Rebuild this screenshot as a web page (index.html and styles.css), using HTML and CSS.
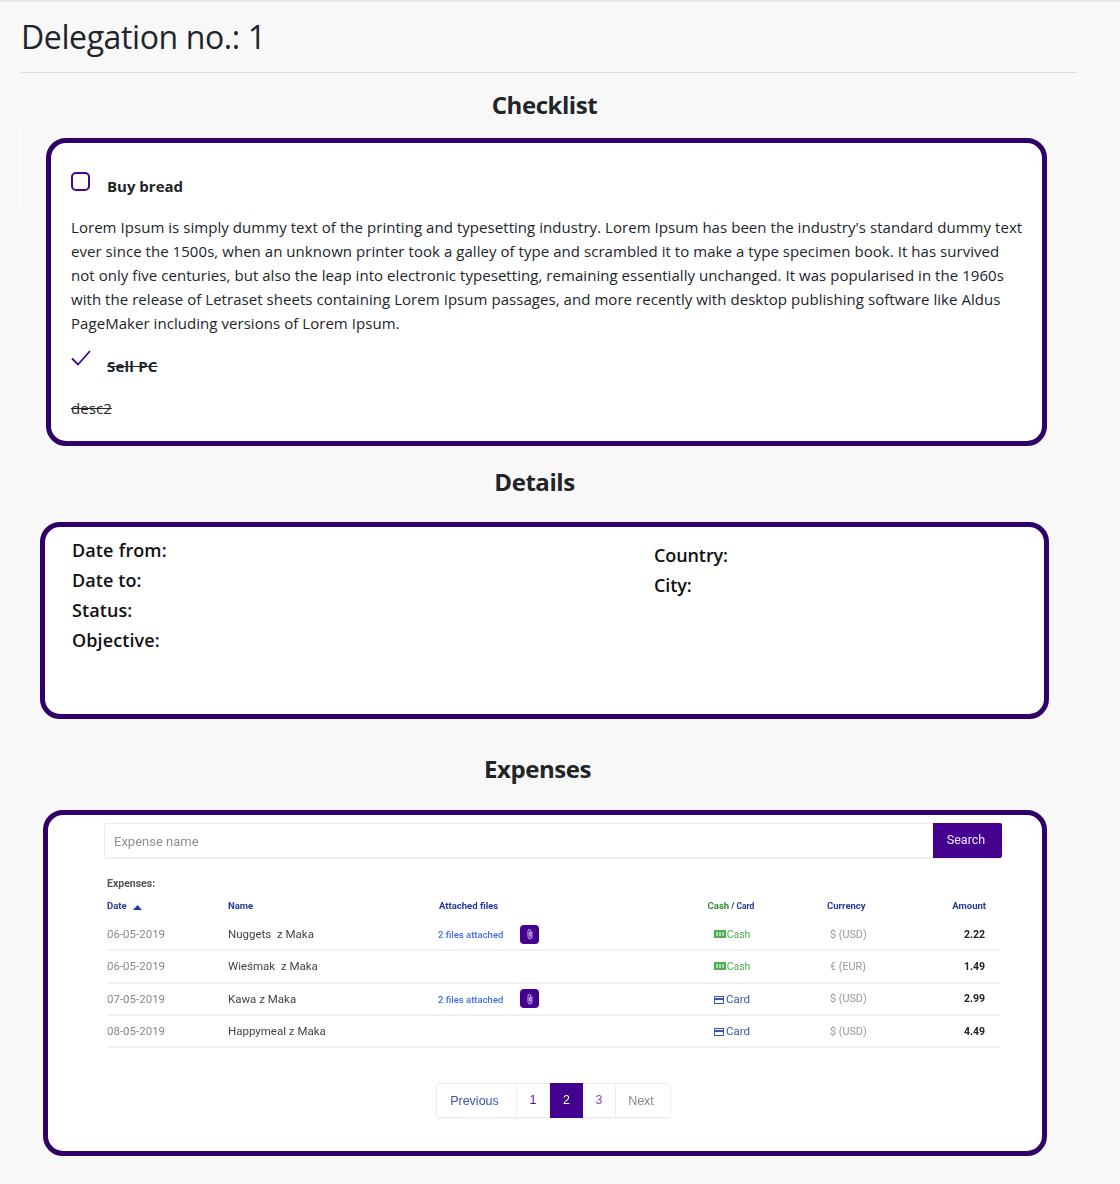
FILE: index.html
```html
<!DOCTYPE html>
<html lang="en">
<head>
<meta charset="utf-8">
<title>Delegation no.: 1</title>
<link rel="stylesheet" href="styles.css">
</head>
<body>
<div class="topshade"></div>
<main class="page">
  <h1 class="title">Delegation no.: 1</h1>
  <hr class="rule">
  <h2 class="heading heading-checklist">Checklist</h2>
  <section class="card card-checklist">
    <div class="task">
      <span class="box"></span>
      <strong class="task-name">Buy bread</strong>
    </div>
    <p class="task-desc">Lorem Ipsum is simply dummy text of the printing and typesetting industry. Lorem Ipsum has been the industry's standard dummy text ever since the 1500s, when an unknown printer took a galley of type and scrambled it to make a type specimen book. It has survived not only five centuries, but also the leap into electronic typesetting, remaining essentially unchanged. It was popularised in the 1960s with the release of Letraset sheets containing Lorem Ipsum passages, and more recently with desktop publishing software like Aldus PageMaker including versions of Lorem Ipsum.</p>
    <div class="task task-done">
      <svg class="tick" width="20" height="18" viewBox="0 0 20 18"><path d="M1 9.5 L7 15.5 L19 2" fill="none" stroke="#3f0a8c" stroke-width="1.8"/></svg>
      <strong class="task-name done">Sell PC</strong>
    </div>
    <p class="task-desc task-desc-last done">desc2</p>
  </section>

  <h2 class="heading heading-details">Details</h2>
  <section class="card card-details">
    <div class="detail-col">
      <div class="detail detail-from">Date from:</div>
      <div class="detail">Date to:</div>
      <div class="detail">Status:</div>
      <div class="detail">Objective:</div>
    </div>
    <div class="detail-col-right">
      <div class="detail">Country:</div>
      <div class="detail">City:</div>
    </div>
  </section>

  <h2 class="heading heading-expenses">Expenses</h2>
  <section class="card card-expenses">
    <div class="shot">
      <div class="search">
        <div class="search-input">Expense name</div>
        <div class="search-btn">Search</div>
      </div>
      <div class="exp-label">Expenses:</div>
      <div class="row row-head">
        <span class="c-date">Date <svg class="sort" width="9" height="5" viewBox="0 0 9 5"><path d="M4.5 0 L9 5 L0 5 Z" fill="#1f3aa0"/></svg></span>
        <span class="c-name">Name</span>
        <span class="c-files">Attached files</span>
        <span class="c-clip"></span>
        <span class="c-kind"><span class="green">Cash</span> / Card</span>
        <span class="c-cur">Currency</span>
        <span class="c-amt">Amount</span>
      </div>
      <div class="row">
        <span class="c-date">06-05-2019</span><span class="c-name">Nuggets&nbsp; z Maka</span>
        <span class="c-files"><a class="files">2 files attached</a></span>
        <span class="c-clip"><span class="clip"><svg width="8" height="12" viewBox="0 0 8 12"><path d="M6 3.5 V8.5 a2 2.4 0 0 1 -4 0 V3 a1.4 1.6 0 0 1 2.8 0 V8 a.6 .7 0 0 1 -1.2 0 V4" fill="none" stroke="#d8c8f0" stroke-width=".9"/></svg></span></span>
        <span class="c-kind kind-cash"><svg width="12" height="8" viewBox="0 0 12 8"><rect width="12" height="8" fill="#4caf50"/><rect x="2" y="2" width="8" height="4" fill="#a9dbab"/><rect x="4" y="2" width="1" height="4" fill="#4caf50"/><rect x="7" y="2" width="1" height="4" fill="#4caf50"/></svg>Cash</span>
        <span class="c-cur">$ (USD)</span><span class="c-amt">2.22</span>
      </div>
      <div class="row">
        <span class="c-date">06-05-2019</span><span class="c-name">Wieśmak&nbsp; z Maka</span>
        <span class="c-files"></span><span class="c-clip"></span>
        <span class="c-kind kind-cash"><svg width="12" height="8" viewBox="0 0 12 8"><rect width="12" height="8" fill="#4caf50"/><rect x="2" y="2" width="8" height="4" fill="#a9dbab"/><rect x="4" y="2" width="1" height="4" fill="#4caf50"/><rect x="7" y="2" width="1" height="4" fill="#4caf50"/></svg>Cash</span>
        <span class="c-cur">€ (EUR)</span><span class="c-amt">1.49</span>
      </div>
      <div class="row">
        <span class="c-date">07-05-2019</span><span class="c-name">Kawa z Maka</span>
        <span class="c-files"><a class="files">2 files attached</a></span>
        <span class="c-clip"><span class="clip"><svg width="8" height="12" viewBox="0 0 8 12"><path d="M6 3.5 V8.5 a2 2.4 0 0 1 -4 0 V3 a1.4 1.6 0 0 1 2.8 0 V8 a.6 .7 0 0 1 -1.2 0 V4" fill="none" stroke="#d8c8f0" stroke-width=".9"/></svg></span></span>
        <span class="c-kind kind-card"><svg class="card-ico" width="10" height="8" viewBox="0 0 10 8"><rect x=".5" y=".5" width="9" height="7" fill="none" stroke="#3b55b5"/><rect y="2" width="10" height="2" fill="#3b55b5"/></svg>Card</span>
        <span class="c-cur">$ (USD)</span><span class="c-amt">2.99</span>
      </div>
      <div class="row">
        <span class="c-date">08-05-2019</span><span class="c-name">Happymeal z Maka</span>
        <span class="c-files"></span><span class="c-clip"></span>
        <span class="c-kind kind-card"><svg class="card-ico" width="10" height="8" viewBox="0 0 10 8"><rect x=".5" y=".5" width="9" height="7" fill="none" stroke="#3b55b5"/><rect y="2" width="10" height="2" fill="#3b55b5"/></svg>Card</span>
        <span class="c-cur">$ (USD)</span><span class="c-amt">4.49</span>
      </div>
      <nav class="pager">
        <span class="pg pg-prev">Previous</span>
        <span class="pg pg-num pg-one">1</span>
        <span class="pg pg-num pg-active">2</span>
        <span class="pg pg-num pg-three">3</span>
        <span class="pg pg-next">Next</span>
      </nav>
    </div>
  </section>
</main>
</body>
</html>
```
FILE: styles.css
```css
* { box-sizing: border-box; }
html, body { margin: 0; padding: 0; }
body {
  background: #f8f8f8;
  color: #212529;
  font-family: "Open Sans", "Noto Sans", sans-serif;
  height: 1184px;
  overflow: hidden;
}
.topshade {
  height: 3px;
  background: linear-gradient(#dddddd, #f8f8f8);
}
.page { padding: 0 43px 0 21px; position: relative; }
.page::before {
  content: "";
  position: absolute;
  left: 19px;
  top: 108px;
  width: 1px;
  height: 86px;
  background: #fff;
}
.title {
  margin: 14px 0 0;
  font-size: 32px;
  line-height: 40px;
  font-weight: 500;
  letter-spacing: -0.4px;
}
.rule {
  margin: 15px 0 0;
  border: 0;
  border-top: 1px solid #dfdfdf;
}
.heading {
  margin: 0;
  font-size: 24px;
  line-height: 32px;
  font-weight: 700;
  text-align: center;
  letter-spacing: -0.45px;
}
.heading-checklist { margin-top: 16px; width: 1047px; }
.heading-details { margin-top: 20px; width: 1027px; }
.heading-expenses { margin-top: 34px; width: 1033px; }

.card {
  background: #fff;
  border: 5px solid #2e0068;
  border-radius: 20px;
}
.card-checklist {
  margin: 17px 0 0 25px;
  width: 1001px;
  height: 308px;
  padding: 29px 19px 0 20px;
}
.task { display: flex; align-items: flex-start; height: 30px; }
.box {
  width: 19px;
  height: 19px;
  border: 2px solid #3f0a8c;
  border-radius: 5px;
  flex: none;
}
.tick { flex: none; margin-top: -1px; }
.task-name {
  margin-left: 17px;
  font-size: 15px;
  line-height: 20px;
  margin-top: 4px;
  font-weight: 700;
}
.task-done .task-name { margin-left: 16px; margin-top: 6px; letter-spacing: .2px; }
.task-desc {
  margin: 13px 0 0;
  font-size: 15px;
  line-height: 24px;
  letter-spacing: .05px;
}
.task-done { margin-top: 15px; }
.task-desc-last { margin-top: 16px; }
.done { text-decoration: line-through; }

.card-details {
  margin: 24px 0 0 19px;
  width: 1009px;
  height: 197px;
  display: flex;
  padding: 8px 0 0 27px;
  font-weight: 600;
  font-size: 18px;
  line-height: 30px;
  color: #111;
}
.detail-col { width: 582px; flex: none; letter-spacing: .1px; }
.detail-col-right { flex: 1; min-width: 0; padding-top: 5px; letter-spacing: -.1px; }
.detail-from { word-spacing: .5px; }

.card-expenses {
  margin: 25px 0 0 22px;
  width: 1004px;
  height: 346px;
  padding: 8px 0 0 55px;
}
.shot {
  width: 900px;
  font-family: Roboto, "Liberation Sans", sans-serif;
  font-size: 12px;
  color: #444;
  filter: blur(.25px);
}
.search {
  display: flex;
  height: 35px;
  border: 1px solid #ececec;
  border-radius: 3px;
  box-shadow: 0 1px 1px #efefef;
  width: 898px;
  margin-left: 1px;
}
.search-input {
  flex: 1;
  padding: 0 9px;
  font-size: 13px;
  line-height: 35px;
  color: #8f8f8f;
}
.search-btn {
  width: 69px;
  background: #44008f;
  color: #f0e8fb;
  font-size: 12.5px;
  line-height: 34px;
  text-align: center;
  border-radius: 0 2px 2px 0;
  margin: -1px -1px -1px 0;
  height: 35px;
  padding-right: 3px;
}
.exp-label {
  margin: 18px 0 0 4px;
  height: 16px;
  font-size: 10.5px;
  line-height: 16px;
  font-weight: 700;
  color: #555;
}
.row {
  display: grid;
  grid-template-columns: 121px 210px 82px 150px 122px 125px 1fr;
  width: 893px;
  margin-left: 4px;
  height: 32.3px;
  align-items: center;
  border-bottom: 2px solid #f1f1f1;
}
.row-head {
  height: 21px;
  margin-top: 6px;
  border: 0;
  font-size: 9.5px;
  font-weight: 700;
  color: #25399e;
  align-items: start;
  padding-top: 2px;
  line-height: 12px;
}
.row-head .c-kind { font-size: 8.5px; }
.row-head .c-files { padding-left: 1px; }
.green { color: #2f8f2f; font-size: 9.5px; }
.sort { margin-left: 4px; vertical-align: -1px; }
.c-date { color: #888; font-size: 11.5px; }
.row-head .c-date { color: #25399e; font-size: 9.5px; }
.c-name { color: #444; font-size: 11.5px; }
.row-head .c-name { color: #25399e; font-size: 9.5px; }
.files { color: #3f6cf0; font-size: 9.5px; font-weight: 500; white-space: nowrap; }
.clip {
  display: inline-flex;
  align-items: center;
  justify-content: center;
  width: 19px;
  height: 19px;
  background: #44008f;
  border-radius: 4px;
  vertical-align: middle;
}
.c-kind { display: flex; align-items: center; justify-content: center; gap: 1px; font-size: 11.5px; white-space: pre; }
.row-head .c-kind { display: block; text-align: center; }
.kind-cash { color: #4caf50; font-size: 10.5px; padding-left: 2px; }
.kind-card { color: #3b55b5; padding-left: 2px; gap: 2px; }
.card-ico { margin-top: 2px; }
.c-cur { color: #999; font-size: 10.8px; padding-left: 38px; }
.row-head .c-cur { color: #25399e; font-size: 9.5px; padding-left: 35px; }
.c-amt { text-align: right; padding-right: 15px; font-weight: 700; color: #222; font-size: 10.5px; }
.row-head .c-amt { color: #25399e; font-size: 9.5px; padding-right: 14px; }

.pager {
  display: flex;
  width: max-content;
  margin: 35px 0 0 333px;
  height: 35px;
  border: 1px solid #eeeeee;
  border-radius: 3px;
  box-shadow: 0 1px 1px #f2f2f2;
  font-size: 12.5px;
  font-family: "Liberation Sans", sans-serif;
  line-height: 35px;
  text-align: center;
}
.pg { border-right: 1px solid #eeeeee; }
.pg-prev { width: 80px; color: #3b55b5; padding-right: 4px; }
.pg-num { width: 33px; line-height: 33px; }
.pg-one { color: #4a14a0; }
.pg-active { background: #44008f; color: #fff; margin: -1px 0; height: 35px; line-height: 35px; border-right: 0; }
.pg-three { color: #7a4fc0; }
.pg-next { width: 54px; color: #888; border-right: 0; padding-right: 4px; }
```
